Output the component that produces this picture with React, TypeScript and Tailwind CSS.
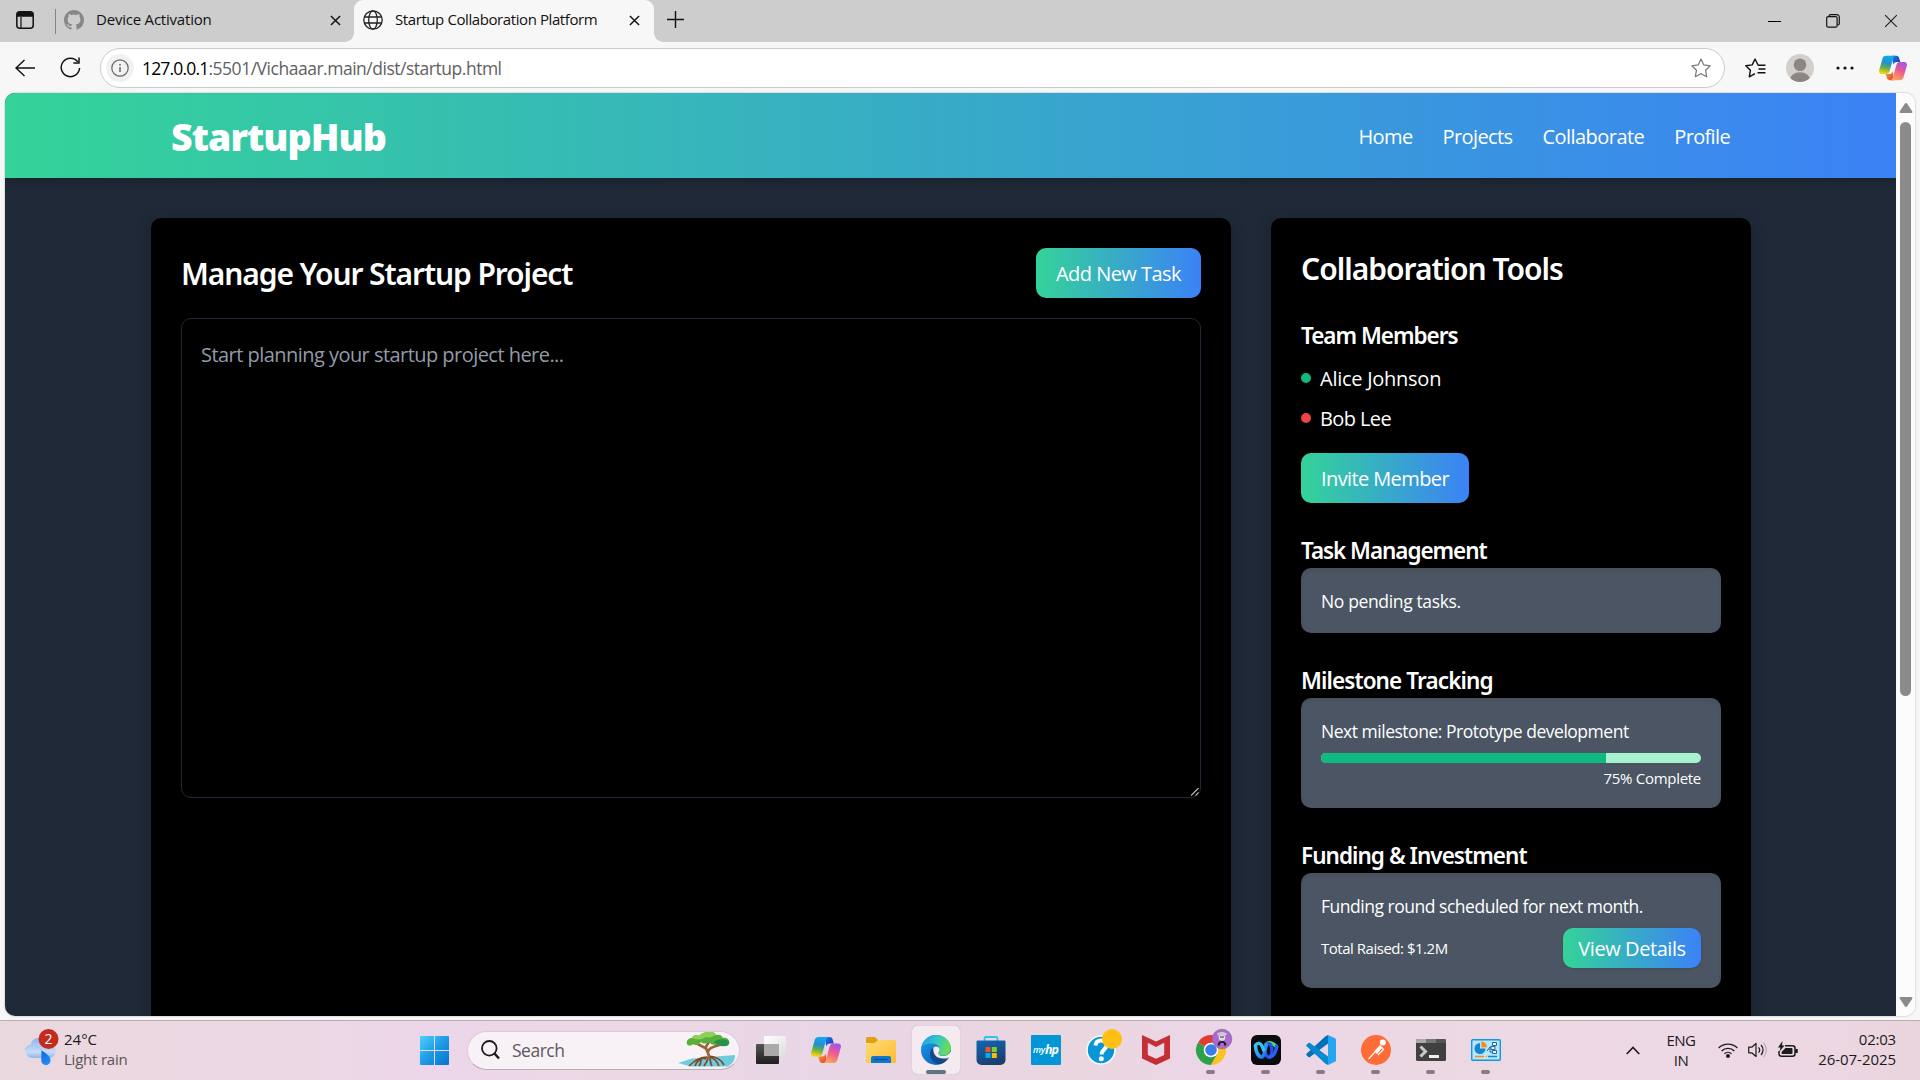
import React from "react";

type Box = { children?: React.ReactNode; className?: string };

/* ---------- shared drawings ---------- */

function Copilot({ size, id }: { size: number; id: string }) {
  return (
    <svg width={size} height={size} viewBox="0 0 30 30">
      <defs>
        <linearGradient id={id + "a"} x1="0.5" y1="0" x2="0.3" y2="1">
          <stop offset="0.05" stopColor="#12a5f0" />
          <stop offset="0.4" stopColor="#2a8fc8" />
          <stop offset="0.65" stopColor="#5fb04a" />
          <stop offset="0.95" stopColor="#f3cf12" />
        </linearGradient>
        <linearGradient id={id + "b"} x1="0.8" y1="0" x2="0.4" y2="1">
          <stop offset="0" stopColor="#a052ee" />
          <stop offset="0.5" stopColor="#ee5a92" />
          <stop offset="1" stopColor="#fda458" />
        </linearGradient>
        <linearGradient id={id + "c"} x1="0" y1="0" x2="1" y2="1">
          <stop offset="0" stopColor="#1b7fe8" />
          <stop offset="1" stopColor="#1a2fb8" />
        </linearGradient>
        <linearGradient id={id + "d"} x1="0" y1="0" x2="1" y2="1">
          <stop offset="0" stopColor="#f9a62a" />
          <stop offset="1" stopColor="#e5383d" />
        </linearGradient>
      </defs>
      <path d="M14 2h4.500c2 0 2.800 1.200 3.300 3l1 3.500h-3.800c-2 0-3.200 1-3.800 3z" fill={`url(#${id}c)`} />
      <path d="M16 28h-4.500c-2 0-2.800-1.200-3.300-3l-1-3.500H11c2 0 3.200-1 3.800-3z" fill={`url(#${id}d)`} />
      <path d="M7.500 2H18c-1.800.3-2.500 1.500-3 3.300l-3.600 13c-.7 2.300-1.800 3.200-4 3.200H3c-2.500 0-3.400-2-2.700-4.600L3.700 5C4.300 3 5.500 2 7.500 2z" fill={`url(#${id}a)`} />
      <path d="M22.500 28H12c1.800-.3 2.500-1.500 3-3.300l3.600-13c.7-2.300 1.800-3.200 4-3.200H27c2.500 0 3.400 2 2.700 4.600L26.300 25c-.6 2-1.800 3-3.800 3z" fill={`url(#${id}b)`} />
    </svg>
  );
}

function CloseX({ size = 11, color = "#111", w = 1.6 }: { size?: number; color?: string; w?: number }) {
  return (
    <svg width={size} height={size} viewBox="0 0 12 12" fill="none" stroke={color} strokeWidth={w}>
      <path d="M1 1l10 10M11 1L1 11" />
    </svg>
  );
}

/* ---------- browser chrome ---------- */

function TabBar() {
  return (
    <div className="flex h-[42px] shrink-0 items-center bg-[#cdcdcd] text-[15px] leading-[20px] text-[#111]">
      <svg className="ml-4 mt-[-2px] shrink-0" width="18" height="18" viewBox="0 0 18 18">
        <rect x="0.8" y="0.8" width="16.400" height="16.400" rx="3" fill="none" stroke="#111" strokeWidth="1.500" />
        <path d="M1 5.800V4a3 3 0 0 1 3-3h10a3 3 0 0 1 3 3v1.800z" fill="#111" />
        <path d="M5 6v11" stroke="#111" strokeWidth="1.200" />
      </svg>
      <div className="ml-[21px] h-[25px] w-px shrink-0 bg-[#858585]" />
      <svg className="ml-2 mt-[-2px] shrink-0" width="20" height="20" viewBox="0 0 16 16" fill="#85888b">
        <path d="M8 0C3.580 0 0 3.580 0 8c0 3.540 2.290 6.530 5.470 7.590.4.070.55-.17.55-.38 0-.19-.01-.82-.01-1.490-2.010.37-2.530-.49-2.690-.94-.09-.23-.48-.94-.82-1.130-.28-.15-.68-.52-.01-.53.63-.01 1.080.58 1.230.82.72 1.210 1.870.87 2.330.66.070-.52.28-.87.51-1.070-1.780-.2-3.640-.89-3.640-3.950 0-.87.31-1.590.82-2.150-.08-.2-.36-1.020.08-2.120 0 0 .67-.21 2.200.82.64-.18 1.320-.27 2-.27s1.360.09 2 .27c1.530-1.040 2.200-.82 2.200-.82.44 1.100.16 1.920.08 2.120.51.56.82 1.270.82 2.150 0 3.070-1.870 3.750-3.650 3.950.29.25.54.73.54 1.480 0 1.070-.01 1.930-.01 2.200 0 .21.15.46.55.38A8.010 8.010 0 0 0 16 8c0-4.420-3.580-8-8-8z" />
      </svg>
      <span className="ml-[12px] mt-[-4px] w-[234px] whitespace-nowrap tracking-[-0.21px]">Device Activation</span>
      <div className="mt-[-2px]"><CloseX /></div>
      <div className="relative ml-[13px] flex h-full w-[300px] shrink-0 items-center rounded-t-[9px] bg-[#f7f7f7]">
        <div className="absolute bottom-0 left-[-9px] size-[9px] bg-[radial-gradient(circle_at_0_0,transparent_8.5px,#f7f7f7_9px)]" />
        <div className="absolute bottom-0 right-[-9px] size-[9px] bg-[radial-gradient(circle_at_100%_0,transparent_8.5px,#f7f7f7_9px)]" />
        <svg className="ml-[9px] mt-[-2px] shrink-0" width="20" height="20" viewBox="0 0 20 20" fill="none" stroke="#222" strokeWidth="1.300">
          <circle cx="10" cy="10" r="9.200" />
          <ellipse cx="10" cy="10" rx="4.300" ry="9.200" />
          <path d="M1.500 7h17M1.500 13h17" />
        </svg>
        <span className="ml-[12px] mt-[-4px] w-[234px] whitespace-nowrap tracking-[-0.41px]">Startup Collaboration Platform</span>
        <div className="mt-[-2px]"><CloseX /></div>
      </div>
      <svg className="ml-[13px] mt-[-4px] shrink-0" width="17" height="17" viewBox="0 0 17 17" stroke="#111" strokeWidth="1.400">
        <path d="M8.500 0v17M0 8.500h17" />
      </svg>
      <div className="ml-auto mr-[22px] flex items-center">
        <div className="h-px w-[13px] bg-black" />
        <svg className="ml-[45px]" width="14" height="14" viewBox="0 0 14 14" fill="none" stroke="#111" strokeWidth="1.200">
          <rect x="0.700" y="2.600" width="10.400" height="10.600" rx="1.500" />
          <path d="M3 2.600V2.200A1.500 1.500 0 0 1 4.500 .7h6.300a2.500 2.500 0 0 1 2.500 2.500v6.300a1.500 1.500 0 0 1-1.500 1.500h-.6" />
        </svg>
        <div className="ml-[44px]"><CloseX size={14} w={1} color="#222" /></div>
      </div>
    </div>
  );
}

function AddressRow() {
  return (
    <div className="flex h-[51px] shrink-0 items-center bg-[#f7f7f7]">
      <svg className="ml-[15px] shrink-0" width="20" height="18" viewBox="0 0 20 18" fill="none" stroke="#111" strokeWidth="1.400">
        <path d="M9.500 1L1 9l8.500 8M1 9h19" />
      </svg>
      <svg className="ml-[25px] shrink-0" width="21" height="21" viewBox="0 0 21 21" fill="none" stroke="#111" strokeWidth="1.500">
        <path d="M17.800 4.900A9.200 9.200 0 1 0 19.600 11" />
        <path d="M19 .6v5.400h-5.600" />
      </svg>
      <div className="ml-[19px] flex h-[40px] w-[1625px] shrink-0 items-center rounded-full border border-[#cbcbcb] bg-white">
        <div className="ml-[5px] flex size-[28px] items-center justify-center rounded-full bg-[#f1f1f1]">
          <svg width="18" height="18" viewBox="0 0 18 18" fill="none" stroke="#666" strokeWidth="1.200">
            <circle cx="9" cy="9" r="8.200" />
            <path d="M9 8v5" strokeWidth="1.500" />
            <path d="M9 5v1.500" strokeWidth="1.600" />
          </svg>
        </div>
        <div className="ml-[8px] whitespace-nowrap text-[17.5px] leading-[24px] text-[#5f5f5f]">
          <span className="tracking-[-0.82px] text-black">127.0.0.1</span>
          <span className="tracking-[-0.48px]">:5501/Vichaaar.main/dist/startup.html</span>
        </div>
        <svg className="ml-auto mr-[13px]" width="20" height="20" viewBox="0 0 20 20" fill="none" stroke="#777" strokeWidth="1.200" strokeLinejoin="round">
          <path d="M10 1l2.800 5.900 6.400.9-4.600 4.500 1.100 6.500L10 15.700l-5.700 3.100 1.100-6.500L.8 7.800l6.400-.9z" />
        </svg>
      </div>
      <svg className="ml-[20px] shrink-0" width="21" height="20" viewBox="0 0 21 20" fill="none" stroke="#111" strokeWidth="1.400" strokeLinejoin="round">
        <path d="M20.500 7.200h-7.300L10 1 7.200 6.900.8 7.800l4.600 4.500-1.100 6.500L10 15.700M13.500 11h7M12.500 14.800h8" />
      </svg>
      <svg className="ml-[20px] shrink-0" width="28" height="28" viewBox="0 0 28 28">
        <clipPath id="av"><circle cx="14" cy="14" r="14" /></clipPath>
        <g clipPath="url(#av)">
          <rect width="28" height="28" fill="#d3d0cc" />
          <circle cx="14" cy="10.700" r="6.300" fill="#8b8681" />
          <ellipse cx="14" cy="26" rx="10" ry="7.700" fill="#8b8681" />
        </g>
      </svg>
      <svg className="ml-[22px] shrink-0" width="18" height="4" viewBox="0 0 18 4" fill="#111">
        <circle cx="2" cy="2" r="1.600" /><circle cx="9" cy="2" r="1.600" /><circle cx="16" cy="2" r="1.600" />
      </svg>
      <div className="ml-[25px]"><Copilot size={28} id="cpTop" /></div>
    </div>
  );
}

/* ---------- web page ---------- */

function GradientButton({ children, className = "" }: Box) {
  return (
    <button className={"flex items-center justify-center whitespace-nowrap rounded-[10px] bg-[linear-gradient(to_right,#34d399,#3b82f6)] pt-[2px] text-[20px] leading-[30px] text-white " + className}>
      {children}
    </button>
  );
}

function Heading({ children, className = "" }: Box) {
  return <h3 className={"whitespace-nowrap font-['Noto_Sans','Open_Sans',sans-serif] text-[22.5px] font-semibold leading-[35px] " + className}>{children}</h3>;
}

function Card({ children, className = "" }: Box) {
  return <div className={"rounded-[10px] bg-[#4b5563] p-5 text-[17.5px] leading-[25px] shadow-[inset_0_2px_4px_rgba(0,0,0,0.06)] " + className}>{children}</div>;
}

function WebPage() {
  return (
    <div className="flex h-[923px] w-[1891px] flex-col overflow-hidden bg-[#1f2937] text-white">
      <header className="z-10 h-[85px] shrink-0 bg-[linear-gradient(to_right,#34d399,#3b82f6)] px-[146px] shadow-[0_4px_8px_rgba(0,0,0,0.18)]">
        <div className="flex h-full items-center justify-between px-5">
          <div className="pt-[2px] text-[37.5px] font-extrabold leading-[45px] tracking-[-0.95px]">StartupHub</div>
          <nav className="flex gap-[30px] pt-[3px] text-[20px] leading-[30px]">
            <a className="tracking-[-0.6px]">Home</a>
            <a className="tracking-[-0.6px]">Projects</a>
            <a className="tracking-[-0.55px]">Collaborate</a>
            <a className="tracking-[-0.65px]">Profile</a>
          </nav>
        </div>
      </header>
      <div className="flex gap-[40px] px-[146px] pt-[40px]">
        <main className="h-[900px] w-[1080px] shrink-0 rounded-[10px] bg-black p-[30px] shadow-[0_4px_16px_rgba(0,0,0,0.18)]">
          <div className="mb-5 flex h-[50px] items-center justify-between">
            <h2 className="pt-[2px] font-['Noto_Sans','Open_Sans',sans-serif] text-[30px] font-semibold leading-[40px] tracking-[-1.1px]">Manage Your Startup Project</h2>
            <GradientButton className="h-[50px] w-[165px] tracking-[-0.54px]">Add New Task</GradientButton>
          </div>
          <div className="relative h-[480px] rounded-[10px] border border-[#1f2937] px-[19px] py-[20px] text-[20px] leading-[32px] tracking-[-0.54px] text-[#939ba8]">
            Start planning your startup project here...
            <svg className="absolute bottom-px right-px" width="8" height="8" viewBox="0 0 9 9" stroke="#c4c4c4" strokeWidth="1.200">
              <path d="M0 8.500L8.500 0M5 8.500L8.500 5" />
            </svg>
          </div>
        </main>
        <aside className="h-[900px] w-[480px] shrink-0 rounded-[10px] bg-black p-[30px] shadow-[0_4px_16px_rgba(0,0,0,0.18)]">
          <h2 className="mb-[29px] pt-px font-['Noto_Sans','Open_Sans',sans-serif] text-[30px] font-semibold leading-[40px] tracking-[-1px]">Collaboration Tools</h2>
          <section className="mb-[30px]">
            <Heading className="mb-[10px] tracking-[-1.02px]">Team Members</Heading>
            <ul className="mb-5 flex flex-col gap-[10px] text-[20px] leading-[30px]">
              <li className="flex h-[30px] items-center gap-[9px]">
                <span className="size-[10px] rounded-full bg-[#10b981]" />
                <span className="pt-[2px] tracking-[-0.26px]">Alice Johnson</span>
              </li>
              <li className="flex h-[30px] items-center gap-[9px]">
                <span className="size-[10px] rounded-full bg-[#ef4444]" />
                <span className="pt-[2px] tracking-[-0.6px]">Bob Lee</span>
              </li>
            </ul>
            <GradientButton className="h-[50px] w-[168px] tracking-[-0.6px]">Invite Member</GradientButton>
          </section>
          <section className="mb-[30px]">
            <Heading className="tracking-[-1.06px]">Task Management</Heading>
            <Card className="tracking-[-0.36px]"><p className="-mb-px pt-px">No pending tasks.</p></Card>
          </section>
          <section className="mb-[30px]">
            <Heading className="tracking-[-0.9px]">Milestone Tracking</Heading>
            <Card>
              <p className="-mb-px pt-px tracking-[-0.48px]">Next milestone: Prototype development</p>
              <div className="mt-[10px] h-[10px] overflow-hidden rounded-[5px] bg-[#a7f3d0]">
                <div className="h-full w-3/4 bg-[#10b981]" />
              </div>
              <p className="mt-[5px] text-right text-[15px] leading-[20px] tracking-[-0.28px]">75% Complete</p>
            </Card>
          </section>
          <section>
            <Heading className="tracking-[-0.96px]">Funding &amp; Investment</Heading>
            <Card>
              <p className="-mb-px pt-px tracking-[-0.48px]">Funding round scheduled for next month.</p>
              <div className="mt-[10px] flex items-center justify-between">
                <span className="text-[15px] leading-[20px] tracking-[-0.48px]">Total Raised: $1.2M</span>
                <GradientButton className="h-[40px] w-[138px] tracking-[-0.42px] shadow">View Details</GradientButton>
              </div>
            </Card>
          </section>
        </aside>
      </div>
    </div>
  );
}

function Scrollbar() {
  return (
    <div className="flex w-[19px] flex-col items-center bg-[#fcfcfc] pt-[10px] pb-[9px]">
      <svg width="14" height="10" viewBox="0 0 14 10" fill="#8b8b8b"><path d="M7 0c.6 0 .9.300 1.200.8l5 7.400c.5.900.2 1.800-.9 1.800H1.700C.6 10 .3 9.100.8 8.200l5-7.400C6.100.3 6.400 0 7 0z" /></svg>
      <div className="mt-[9px] h-[574px] w-[11px] rounded-full bg-[#8b8b8b]" />
      <svg className="mt-auto" width="14" height="10" viewBox="0 0 14 10" fill="#8b8b8b"><path d="M7 10c-.6 0-.9-.3-1.200-.8l-5-7.400C.3.900.6 0 1.700 0h10.600c1.100 0 1.400.9.900 1.800l-5 7.400c-.3.500-.6.800-1.200.8z" /></svg>
    </div>
  );
}

/* ---------- taskbar ---------- */

function WeatherIcon() {
  return (
    <svg className="shrink-0" width="35" height="40" viewBox="0 0 35 40">
      <defs>
        <linearGradient id="cl" x1="0" y1="0" x2="0" y2="1"><stop offset="0" stopColor="#8fb3ec" /><stop offset="0.700" stopColor="#c6dcf8" /><stop offset="1" stopColor="#8fb6ee" /></linearGradient>
        <linearGradient id="dr" x1="0" y1="0" x2="0.500" y2="1"><stop offset="0" stopColor="#1766d8" /><stop offset="1" stopColor="#1a8cff" /></linearGradient>
      </defs>
      <path d="M7 29a7 7 0 0 1-1-13.800C6.500 11.500 9.500 9 13.500 9c4 0 7.500 2.800 8 6.500h2.500a6.600 6.600 0 0 1 0 13.500z" fill="url(#cl)" />
      <path d="M0 21.500a7 7 0 0 1 12.500-2.800C15 18.500 17 20.500 17 23" fill="none" stroke="#a9c8f5" strokeWidth="1.200" />
      <path d="M16.500 21.500c4.500 2.500 9 6 9 10a4.600 4.600 0 0 1-9.200 0z" fill="url(#dr)" />
      <circle cx="23.500" cy="10" r="10" fill="#c42b1c" />
      <text x="23.500" y="15" textAnchor="middle" fontSize="14" fill="#fff">2</text>
    </svg>
  );
}

function Tree() {
  return (
    <svg className="shrink-0" width="58" height="36" viewBox="0 0 58 36">
      <path d="M0 31l14-4.500L57 23c.5 5-3 9-7 11.500H13z" fill="#6fcbe0" />
      <path d="M28 27c-3-2-9 1-11 7M29 25c-8 0-14 5-18 9M30 25c0 4-2 6-4 9M31 25c2 3 1 6 3 9M31 25c5 1 8 4 10 9M31 24c9 1 13 5 15 9M23 28c0 3-1 5-2 6" fill="none" stroke="#7b4b27" strokeWidth="1.700" />
      <path d="M18 11l9 5 4-6M30 27c3-5-2-7-2-12M30 20c1-4 5-5 11-7l5-3" fill="none" stroke="#9a6535" strokeWidth="2.600" />
      <path d="M9 12c-1-4 2-6 5-6 1-3 5-4 7-2 3-3 6-4 9-4 4-1 7 1 8 3 4-1 6 1 7 3 4-1 7 2 6 6-2 3-7 3-9 0-4 2-9 1-11-2-3 2-6 2-8 0-3 3-5 4-8 2-2 2-5 2-6 0z" fill="#55b03c" />
      <path d="M14 6c1-3 5-4 7-2 3-3 6-4 9-4 4-1 7 1 8 3-4 2-7 3-10 2-4 3-10 3-14 1z" fill="#8bd153" />
      <path d="M36 10c3-3 9-4 15-1 1 4-2 5-5 5-3 1-7-1-10-4z" fill="#23924b" />
    </svg>
  );
}

function Slot({ children, className = "" }: Box) {
  return <div className={"relative flex h-[48px] w-[55px] shrink-0 items-center justify-center " + className}>{children}</div>;
}

function Dot() {
  return <span className="absolute bottom-0 left-[23px] h-[4px] w-[9px] rounded-full bg-[#897b85]" />;
}

function TaskIcons() {
  return (
    <>
      <Slot>
        <svg width="30" height="30" viewBox="0 0 30 30">
          <defs>
            <linearGradient id="tv" x1="0" y1="0" x2="0" y2="1"><stop offset="0" stopColor="#555" /><stop offset="1" stopColor="#1e1e1e" /></linearGradient>
            <linearGradient id="tw" x1="0" y1="0" x2="1" y2="1"><stop offset="0" stopColor="#fff" /><stop offset="1" stopColor="#dedede" /></linearGradient>
          </defs>
          <rect x="0" y="9" width="23" height="20" rx="1" fill="url(#tv)" />
          <rect x="8" y="1" width="22" height="20" rx="1" fill="url(#tw)" />
          <path d="M8 9h15v12H8z" fill="#aaa" />
        </svg>
      </Slot>
      <Slot><Copilot size={30} id="cpTask" /></Slot>
      <Slot>
        <svg width="30" height="30" viewBox="0 0 30 30">
          <defs><linearGradient id="fo" x1="0" y1="0" x2="1" y2="1"><stop offset="0" stopColor="#ffdc76" /><stop offset="1" stopColor="#fdbc2d" /></linearGradient></defs>
          <path d="M0 3.500A1.500 1.500 0 0 1 1.500 2H9l3 3-4 4H0z" fill="#e0a00f" />
          <path d="M0 8h9l3-3h16.500A1.500 1.500 0 0 1 30 6.500V28H0z" fill="url(#fo)" />
          <path d="M5 28v-5a2 2 0 0 1 2-2h16a2 2 0 0 1 2 2v5z" fill="#0f78cf" />
          <path d="M8.500 24.500h13" stroke="#0a4e94" strokeWidth="1.400" />
        </svg>
      </Slot>
      <Slot>
        <div className="relative flex size-[48px] items-center justify-center rounded-[5px] bg-[#f4eaf0] shadow-[0_0_1px_rgba(0,0,0,0.3)]">
          <svg width="30" height="30" viewBox="0 0 30 30">
            <defs>
              <linearGradient id="e1" x1="0" y1="0" x2="1" y2="0.300"><stop offset="0" stopColor="#2298e2" /><stop offset="0.500" stopColor="#30c3cf" /><stop offset="1" stopColor="#67de59" /></linearGradient>
              <linearGradient id="e2" x1="0" y1="0" x2="0.800" y2="1"><stop offset="0" stopColor="#1aa0e8" /><stop offset="1" stopColor="#0c5cb8" /></linearGradient>
            </defs>
            <circle cx="15" cy="15" r="15" fill="url(#e2)" />
            <path d="M.5 12C2 5 8 0 15 0c8.500 0 15 6.300 15 13 0 4.500-3.500 7.700-8 7.700-3 0-4.800-1-4.800-2.300 0-.8 1.400-1.200 1.400-3.600 0-3.500-3-6.300-7.500-6.300C6.500 8.500 2.500 10 .5 12z" fill="url(#e1)" />
            <path d="M12.500 12.500c-2.500 1.500-3.700 4-3.500 7 .3 5 4.500 9.500 10 9.800 4-1.300 7-4 9-7.300-3 1.800-7 2.200-10.300.8-4-1.700-6-5.500-5.200-10.300z" fill="#114a8c" />
            <path d="M12.500 12.500c2-1.700 5-.8 6 1.200.5 2.300-1.300 3.500-1.300 4.700 0 1.600 2.300 2.600 5.300 2.600 3 0 5-1.200 7.500-4.500l.5 5-2.200.9c-3 1.500-7.500 1.600-10.600.4-4-1.700-6-5.500-5.200-10.300z" fill="#f4eaf0" />
          </svg>
          <span className="absolute bottom-0 h-[4px] w-[20px] rounded-full bg-[#617482]" />
        </div>
      </Slot>
      <Slot>
        <svg width="30" height="30" viewBox="0 0 30 30">
          <defs><linearGradient id="st" x1="0" y1="0" x2="0.400" y2="1"><stop offset="0" stopColor="#0f68b8" /><stop offset="1" stopColor="#1a3f6e" /></linearGradient></defs>
          <path d="M8.500 7V3.500A1.500 1.500 0 0 1 10 2h10a1.500 1.500 0 0 1 1.500 1.500V7" fill="none" stroke="#2fc1f2" strokeWidth="1.800" />
          <path d="M.5 6.500A1 1 0 0 1 1.500 5.500h27a1 1 0 0 1 1 1V25a5 5 0 0 1-5 5h-19a5 5 0 0 1-5-5z" fill="url(#st)" />
          <path d="M9.500 12h5v5h-5z" fill="#f1511b" /><path d="M15.800 12h5v5h-5z" fill="#80cc28" />
          <path d="M9.500 18h5v5h-5z" fill="#00adef" /><path d="M15.800 18h5v5h-5z" fill="#fbbc09" />
        </svg>
      </Slot>
      <Slot>
        <div className="flex size-[30px] items-center justify-center rounded-[1px] bg-[#0396d6] text-white">
          <span className="text-[9px] font-semibold italic tracking-[-0.3px]">my</span>
          <span className="text-[12.5px] font-bold italic tracking-[-1px]">hp</span>
        </div>
      </Slot>
      <Slot>
        <svg className="overflow-visible" width="30" height="30" viewBox="0 0 30 30">
          <circle cx="15" cy="15" r="14" fill="#0a96d6" stroke="#f8fbff" strokeWidth="1.600" />
          <path d="M9.500 10.500c.3-3.500 2.700-5 5.500-5 3.200 0 5.500 1.900 5.500 4.700 0 4.300-5 4.300-5 9.300" fill="none" stroke="#fff" strokeWidth="4" />
          <circle cx="15.300" cy="23.700" r="2.500" fill="#fff" />
          <circle cx="26" cy="4" r="10" fill="#ffc014" />
        </svg>
      </Slot>
      <Slot>
        <svg width="28" height="30" viewBox="0 0 28 30" fill="#c42f36">
          <path d="M0 0l14 6.500L28 0v23.500L14 30 0 23.500zM5.800 7.800V20L14 23.800 22.200 20V7.800L14 12z" fillRule="evenodd" />
        </svg>
      </Slot>
      <Slot>
        <svg className="overflow-visible" width="30" height="30" viewBox="0 0 30 30">
          <path d="M15 15L2 7.500A15 15 0 0 1 28 7.500z" fill="#e33b2e" />
          <path d="M15 15L2 7.500A15 15 0 0 0 15 30l6.500-11z" fill="#2da04c" />
          <path d="M15 7.500h13A15 15 0 0 1 15 30l6.500-11.200z" fill="#fcc31e" />
          <circle cx="15" cy="15" r="7.300" fill="#fff" /><circle cx="15" cy="15" r="5.800" fill="#3b7ded" />
          <circle cx="26" cy="4" r="9.800" fill="#ab68d4" stroke="#817286" strokeWidth="0.700" />
          <path d="M21.500 10c.5-3 2-4 4.500-4s4 1 4.500 4l-2 1-1-3h-3l-1 3z" fill="#222" />
          <circle cx="26" cy="2.500" r="3.300" fill="#ddd" /><path d="M21-1.500c3-2 7-2 10 0l-1 2h-8z" fill="#c9c9c9" /><path d="M24 2h4" stroke="#333" />
        </svg>
        <Dot />
      </Slot>
      <Slot>
        <svg width="30" height="30" viewBox="0 0 30 30">
          <defs>
            <linearGradient id="wx" gradientUnits="userSpaceOnUse" x1="3" y1="8" x2="20" y2="22"><stop offset="0" stopColor="#34cdf5" /><stop offset="0.500" stopColor="#2d9bf5" /><stop offset="1" stopColor="#2346e6" /></linearGradient>
          </defs>
          <rect width="30" height="30" rx="6" fill="#090b0e" />
          <path d="M15 9.500c1.500-1.700 4-2 6-1.200 2.500 1 3.500 2 4.500 3.500" fill="none" stroke="#4bdc70" strokeWidth="3.600" strokeLinecap="round" />
          <path d="M15 10.500c1-2.500 4-2.500 5 0 1.500 4 1 10.500-1.500 11.500-2.500.8-4-3-5.500-7" fill="none" stroke="#2351ea" strokeWidth="3.400" strokeLinecap="round" />
          <path d="M25.500 11c.3 4-2.500 11-7 11" fill="none" stroke="#2a62f0" strokeWidth="3.400" strokeLinecap="round" />
          <path d="M4.500 10.500c0 5 2.500 11.500 6 11.500 3.500 0 3-8 5-12" fill="none" stroke="url(#wx)" strokeWidth="3.600" strokeLinecap="round" />
          <path d="M4.500 10.500c1-2.500 4-3 6-.5 1 1.500 1.500 3 2 5" fill="none" stroke="#34c3f5" strokeWidth="3.200" strokeLinecap="round" />
        </svg>
        <Dot />
      </Slot>
      <Slot>
        <svg width="30" height="30" viewBox="0 0 30 30">
          <path d="M22 0l-2.500 1.200L.8 18.600a1.200 1.200 0 0 0 0 1.800l1.600 1.500c.5.400 1.100.4 1.600.1L22 8.500z" fill="#0072b8" />
          <path d="M22 30l-2.500-1.200L.8 11.400a1.200 1.200 0 0 1 0-1.800L2.400 8.100C2.900 7.700 3.500 7.700 4 8l18 13.500z" fill="#0789d2" />
          <path d="M22 0l7 3.200c.6.300 1 .9 1 1.600v20.400c0 .7-.4 1.300-1 1.600L22 30z" fill="#26a5f0" />
        </svg>
        <Dot />
      </Slot>
      <Slot>
        <svg width="30" height="30" viewBox="0 0 30 30">
          <circle cx="15" cy="15" r="15" fill="#ff6c37" />
          <circle cx="21.800" cy="7.500" r="3" fill="#fff" />
          <path d="M19 10l2.500 2.500-5.500 6.500-3-2.500z" fill="#fff" />
          <path d="M14 17l-6.500 7M20.500 12l2 2.500-5.500 5.500" fill="none" stroke="#fff" strokeWidth="1.200" />
        </svg>
        <Dot />
      </Slot>
      <Slot>
        <svg width="30" height="30" viewBox="0 0 30 30">
          <rect y="4" width="30" height="22" rx="1.500" fill="#404040" />
          <path d="M0 8V5.500A1.500 1.500 0 0 1 1.500 4H10v4z" fill="#aaa" /><path d="M10 4h10v4H10z" fill="#777" /><path d="M20 4h8.500A1.500 1.500 0 0 1 30 5.500V8H20z" fill="#555" />
          <path d="M4.500 11.500l5 5-5 5" fill="none" stroke="#c9c9c9" strokeWidth="3" />
          <path d="M13 20h10v3H13z" fill="#eee" />
        </svg>
        <Dot />
      </Slot>
      <Slot>
        <svg width="30" height="30" viewBox="0 0 30 30">
          <rect x="0.700" y="4.700" width="28.600" height="20.600" rx="1" fill="#b6e6fb" stroke="#1597dc" strokeWidth="1.400" />
          <path d="M9 8a5.500 5.500 0 1 0 5.500 5.500H9z" fill="#1487d2" /><path d="M10.300 6.500a5.800 5.800 0 0 1 5.700 5.700h-5.700z" fill="#fb8c13" />
          <path d="M16 16l3-4h3M19 12v5h3" fill="none" stroke="#22679e" strokeWidth="1" />
          <path d="M21.500 7.500h4v3h-4zM20 11.500h4v3h-4zM21.500 15.500h4v3h-4z" fill="#e6f6ff" stroke="#22679e" />
          <path d="M4 21.500h12" stroke="#fb8c13" strokeWidth="1.500" /><path d="M17 21.500h9" stroke="#1487d2" strokeWidth="1.500" /><path d="M14 20v3" stroke="#fff" />
        </svg>
        <Dot />
      </Slot>
    </>
  );
}

function Taskbar() {
  return (
    <div className="flex h-[60px] shrink-0 items-center border-t border-[#b9adb4] bg-[linear-gradient(to_right,#ead8df,#ecd8e3_14%,#ecd6ea_23%,#ecd8e4_32%,#e9d6e6_42%,#ead6df_56%,#ecd6e8_64%,#ecd8e2_75%,#edd8e5_88%,#ead5df)] pb-px text-[15px] leading-[20px] text-[#1b1b1b]">
      <div className="flex w-[420px] shrink-0 items-center pl-[25px]">
        <div className="mt-[-2px]"><WeatherIcon /></div>
        <div className="ml-[4px] mt-[-2px] leading-[20px]">
          <div>24°C</div>
          <div className="tracking-[-0.22px] text-[#5a5459]">Light rain</div>
        </div>
      </div>
      <svg className="shrink-0" width="29" height="29" viewBox="0 0 29 29">
        <defs><linearGradient id="win" x1="0" y1="0" x2="1" y2="1"><stop offset="0" stopColor="#50d0fb" /><stop offset="0.500" stopColor="#1b9be6" /><stop offset="1" stopColor="#0672d0" /></linearGradient></defs>
        <path d="M1 0h13v14H0V1a1 1 0 0 1 1-1zM15 0h13a1 1 0 0 1 1 1v13H15zM0 15h14v14H1a1 1 0 0 1-1-1zM15 15h14v13a1 1 0 0 1-1 1H15z" fill="url(#win)" />
      </svg>
      <div className="ml-[18px] flex h-[39px] w-[273px] shrink-0 items-center rounded-full border border-[#dccbd6] border-b-[#b9aab4] bg-[#f8f1f6]">
        <svg className="ml-[13px]" width="19" height="20" viewBox="0 0 19 20" fill="none" stroke="#1b1b1b">
          <circle cx="8.300" cy="8.300" r="7.300" strokeWidth="1.800" /><path d="M13.500 13.500l4.500 5" strokeWidth="2.400" />
        </svg>
        <span className="ml-[12px] text-[17.5px] leading-[24px] tracking-[-0.5px] text-[#5f595e]">Search</span>
        <div className="ml-auto mr-[3px]"><Tree /></div>
      </div>
      <div className="ml-[3px] flex shrink-0"><TaskIcons /></div>
      <div className="ml-auto flex items-center pr-[24px]">
        <svg width="14" height="9" viewBox="0 0 14 9" fill="none" stroke="#1b1b1b" strokeWidth="1.600"><path d="M.7 8L7 1.500 13.300 8" /></svg>
        <div className="ml-[21px] w-[40px] text-center tracking-[-0.5px]"><div>ENG</div><div>IN</div></div>
        <svg className="ml-[17px]" width="20" height="16" viewBox="0 0 20 16" fill="none" stroke="#1b1b1b" strokeWidth="1.400">
          <path d="M.6 6a13.300 13.300 0 0 1 18.800 0M3.600 9a9 9 0 0 1 12.800 0M6.500 11.800a5 5 0 0 1 7 0" /><circle cx="10" cy="14" r="1.300" fill="#1b1b1b" />
        </svg>
        <svg className="ml-[10px]" width="20" height="18" viewBox="0 0 20 18" fill="none" stroke="#1b1b1b" strokeWidth="1.200" strokeLinejoin="round">
          <path d="M.7 6.200h3L8 2.500v13l-4.300-3.700h-3z" /><path d="M10.500 6.300a4 4 0 0 1 0 5.400M13 4a7.200 7.200 0 0 1 0 10" /><path d="M15.500 1.800a10.500 10.500 0 0 1 0 14.400" stroke="#baa9b4" />
        </svg>
        <svg className="ml-[10px]" width="21" height="18" viewBox="0 0 21 18" fill="none" stroke="#1b1b1b">
          <path d="M7 4.700h7.500a2.500 2.500 0 0 1 2.500 2.500v5.600a2.500 2.500 0 0 1-2.500 2.500h-11A2.500 2.500 0 0 1 1 12.800V10" strokeWidth="1.500" />
          <path d="M7.500 7h6a1 1 0 0 1 1 1v4a1 1 0 0 1-1 1h-9a1 1 0 0 1-1-1v-1z" fill="#1b1b1b" stroke="none" /><path d="M18.500 8v4" strokeWidth="2.500" />
          <path d="M4.500 0L0 6.500h2.500L1.500 10.500 6.500 4.500H4z" fill="#1b1b1b" stroke="none" />
        </svg>
        <div className="mt-[-2px] w-[97px] text-right"><div className="tracking-[-0.2px]">02:03</div><div className="tracking-[-0.05px]">26-07-2025</div></div>
      </div>
    </div>
  );
}

export default function App() {
  return (
    <div className="flex h-[1080px] w-[1920px] flex-col overflow-hidden bg-[#f7f7f7] font-['Open_Sans','Noto_Sans',sans-serif]">
      <TabBar />
      <AddressRow />
      <div className="ml-[5px] flex h-[923px] w-[1910px] shrink-0 overflow-hidden rounded-[10px] shadow-[0_0_2px_rgba(0,0,0,0.35)]">
        <WebPage />
        <Scrollbar />
      </div>
      <div className="h-[4px] shrink-0" />
      <Taskbar />
    </div>
  );
}
